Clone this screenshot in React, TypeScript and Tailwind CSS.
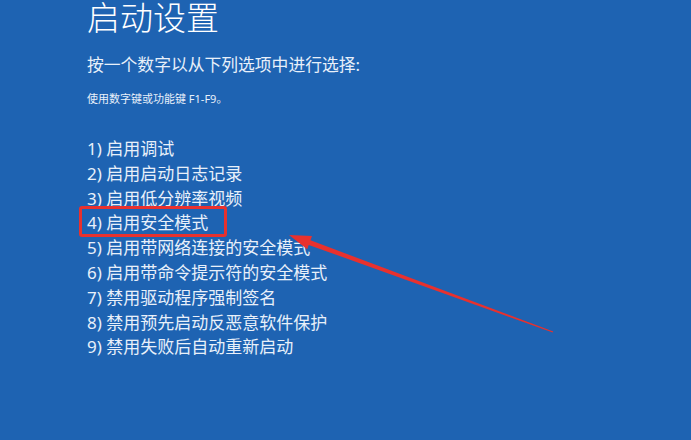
import React from 'react'

const options = [
  '1) 启用调试',
  '2) 启用启动日志记录',
  '3) 启用低分辨率视频',
  '4) 启用安全模式',
  '5) 启用带网络连接的安全模式',
  '6) 启用带命令提示符的安全模式',
  '7) 禁用驱动程序强制签名',
  '8) 禁用预先启动反恶意软件保护',
  '9) 禁用失败后自动重新启动',
]

export default function App() {
  return (
    <div
      className="relative w-[691px] h-[440px] overflow-hidden bg-[#1e63b2] text-[#e8f0fa]"
      style={{ fontFamily: '"Noto Sans", "Noto Sans CJK SC", sans-serif' }}
    >
      <div className="flex flex-col pl-[87px] pt-[1px]">
        <h1 className="text-[33px] leading-[33px] font-light text-white">启动设置</h1>
        <p className="mt-[22px] text-[16.8px] leading-[17px]">按一个数字以从下列选项中进行选择:</p>
        <p className="mt-[20px] text-[11px] leading-[11px]">使用数字键或功能键 F1-F9。</p>
        <ul className="mt-[33px] flex flex-col">
          {options.map((o, i) => (
            <li key={i} className="text-[17px] leading-[24.8px] whitespace-nowrap">
              {i === 3 ? (
                <span className="relative inline-block">
                  {o}
                  {/* red highlight box */}
                  <span className="absolute left-[-8px] top-[-5px] w-[148px] h-[31px] border-[3px] border-[#e8312e] rounded-[3px]" />
                </span>
              ) : (
                o
              )}
            </li>
          ))}
        </ul>
      </div>

      {/* arrow annotation */}
      <svg className="absolute inset-0 pointer-events-none" width="691" height="440" viewBox="0 0 691 440">
        <polygon
          fill="#e8312e"
          points="289,235 312,236 310.5,240.3 553.2,331.5 552.8,332.5 308.7,244.9 307.2,249.2"
        />
      </svg>
    </div>
  )
}
